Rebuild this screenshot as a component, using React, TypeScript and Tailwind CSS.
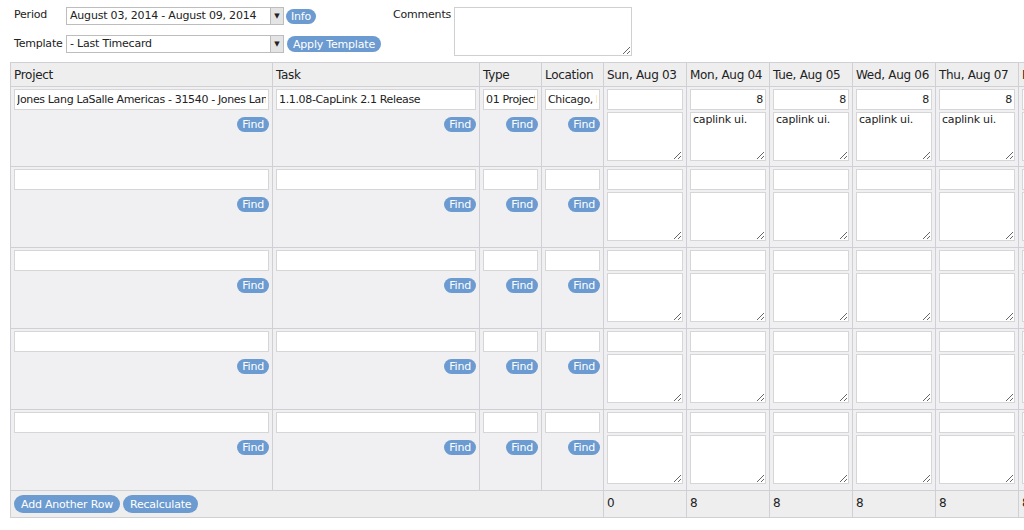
import React from 'react';

const days = ['Sun, Aug 03', 'Mon, Aug 04', 'Tue, Aug 05', 'Wed, Aug 06', 'Thu, Aug 07', 'Fri, Aug 08', 'Sat, Aug 09'];
const hours = ['', '8', '8', '8', '8', '8', ''];
const notes = ['', 'caplink ui.', 'caplink ui.', 'caplink ui.', 'caplink ui.', 'caplink ui.', ''];
const totals = ['0', '8', '8', '8', '8', '8', '0'];

function Pill({ children, className = '' }: { children: React.ReactNode; className?: string }) {
  return (
    <span
      className={`inline-flex items-center justify-center whitespace-nowrap rounded-full bg-[#6b9bd0] text-white leading-none ${className}`}
    >
      {children}
    </span>
  );
}

function Find() {
  return (
    <div className="flex justify-end mt-[7px]">
      <Pill className="h-[15px] px-[5px] text-[11px] tracking-[-0.2px]">Find</Pill>
    </div>
  );
}

function Select({ value }: { value: string }) {
  return (
    <div className="flex h-[18px] w-[218px] shrink-0 border border-[#bdbdbd] bg-white">
      <div className="flex-1 overflow-hidden whitespace-nowrap px-[3px] leading-[16px] text-[11px] tracking-[-0.2px] text-[#222]">
        {value}
      </div>
      <div className="flex w-[13px] items-center justify-center border-l border-[#bdbdbd] bg-[#e4e4e4]">
        <span className="text-[7px] leading-none text-[#222]">▼</span>
      </div>
    </div>
  );
}

function TextBox({ value = '', right = false }: { value?: string; right?: boolean }) {
  return (
    <input
      readOnly
      value={value}
      className={`block h-[21px] w-full border border-[#d6d6d6] bg-white px-[2px] text-[11px] tracking-[-0.35px] text-[#222] outline-none ${right ? 'text-right' : ''}`}
    />
  );
}

function Row({ filled, first }: { filled: boolean; first: boolean }) {
  return (
    <tr className={first ? 'h-[80px]' : 'h-[81px]'}>
      <td className="border border-[#cfcfd4] bg-[#f0f0f2] px-[3px] pt-[2px] align-top">
        <TextBox value={filled ? 'Jones Lang LaSalle Americas - 31540 - Jones Lang LaSalle' : ''} />
        <Find />
      </td>
      <td className="border border-[#cfcfd4] bg-[#f0f0f2] px-[3px] pt-[2px] align-top">
        <TextBox value={filled ? '1.1.08-CapLink 2.1 Release' : ''} />
        <Find />
      </td>
      <td className="border border-[#cfcfd4] bg-[#f0f0f2] px-[3px] pt-[2px] align-top">
        <TextBox value={filled ? '01 Project' : ''} />
        <Find />
      </td>
      <td className="border border-[#cfcfd4] bg-[#f0f0f2] px-[3px] pt-[2px] align-top">
        <TextBox value={filled ? 'Chicago, IL' : ''} />
        <Find />
      </td>
      {days.map((d, i) => (
        <td key={d} className="border border-[#cfcfd4] bg-[#f0f0f2] px-[3px] pt-[2px] align-top">
          <TextBox value={filled ? hours[i] : ''} right />
          <textarea
            readOnly
            value={filled ? notes[i] : ''}
            className="mt-[2px] block h-[49px] w-full border border-[#d6d6d6] bg-white px-[2px] text-[11px] leading-[14px] tracking-[-0.2px] text-[#222] outline-none"
          />
        </td>
      ))}
    </tr>
  );
}

export default function App() {
  return (
    <div
      className="h-[530px] w-[1024px] overflow-hidden bg-white text-[11px] text-[#222]"
      style={{ fontFamily: '"DejaVu Sans", Verdana, sans-serif' }}
    >
      {/* Period / template / comments */}
      <div className="flex pl-[14px] pt-[7px]">
        <div className="flex w-[370px] flex-col gap-[10px]">
          <div className="flex items-center">
            <span className="w-[52px] self-start text-[11px] leading-[16px] tracking-[-0.2px]">Period</span>
            <Select value="August 03, 2014 - August 09, 2014" />
            <Pill className="ml-[2px] h-[15px] px-[5px] text-[11px] tracking-[-0.2px]">Info</Pill>
          </div>
          <div className="flex items-center">
            <span className="w-[52px] text-[11px] tracking-[-0.2px]">Template</span>
            <Select value="- Last Timecard" />
            <Pill className="ml-[3px] h-[16px] px-[6px] text-[11px] tracking-[-0.2px]">Apply Template</Pill>
          </div>
        </div>
        <div className="ml-[9px] flex">
          <span className="w-[61px] text-[11px] leading-[16px] tracking-[-0.2px]">Comments</span>
          <textarea readOnly className="block h-[49px] w-[178px] border border-[#d0d0d0] bg-white outline-none" />
        </div>
      </div>

      {/* Timecard grid */}
      <table className="ml-[10px] mt-[6px] table-fixed border-collapse" style={{ width: 1174 }}>
        <colgroup>
          <col style={{ width: 262 }} />
          <col style={{ width: 207 }} />
          <col style={{ width: 62 }} />
          <col style={{ width: 62 }} />
          {days.map((d) => (
            <col key={d} style={{ width: 83 }} />
          ))}
        </colgroup>
        <thead>
          <tr className="h-[24px]">
            {['Project', 'Task', 'Type', 'Location', ...days].map((h) => (
              <th
                key={h}
                className="overflow-hidden whitespace-nowrap border border-[#cfcfd4] bg-[#eeeeee] px-[3px] text-left text-[12px] font-normal tracking-[-0.3px]"
              >
                {h}
              </th>
            ))}
          </tr>
        </thead>
        <tbody>
          {[true, false, false, false, false].map((f, i) => (
            <Row key={i} filled={f} first={i === 0} />
          ))}
          <tr className="h-[27px]">
            <td colSpan={4} className="border border-[#cfcfd4] bg-[#eeeeee] px-[3px] align-middle">
              <div className="flex gap-[3px]">
                <Pill className="h-[18px] px-[7px] text-[11px] tracking-[-0.2px]">Add Another Row</Pill>
                <Pill className="h-[18px] px-[7px] text-[11px] tracking-[-0.2px]">Recalculate</Pill>
              </div>
            </td>
            {totals.map((t, i) => (
              <td key={i} className="border border-[#cfcfd4] bg-[#eeeeee] px-[3px] pb-[3px] text-[12px] align-middle">
                {t}
              </td>
            ))}
          </tr>
        </tbody>
      </table>
    </div>
  );
}
